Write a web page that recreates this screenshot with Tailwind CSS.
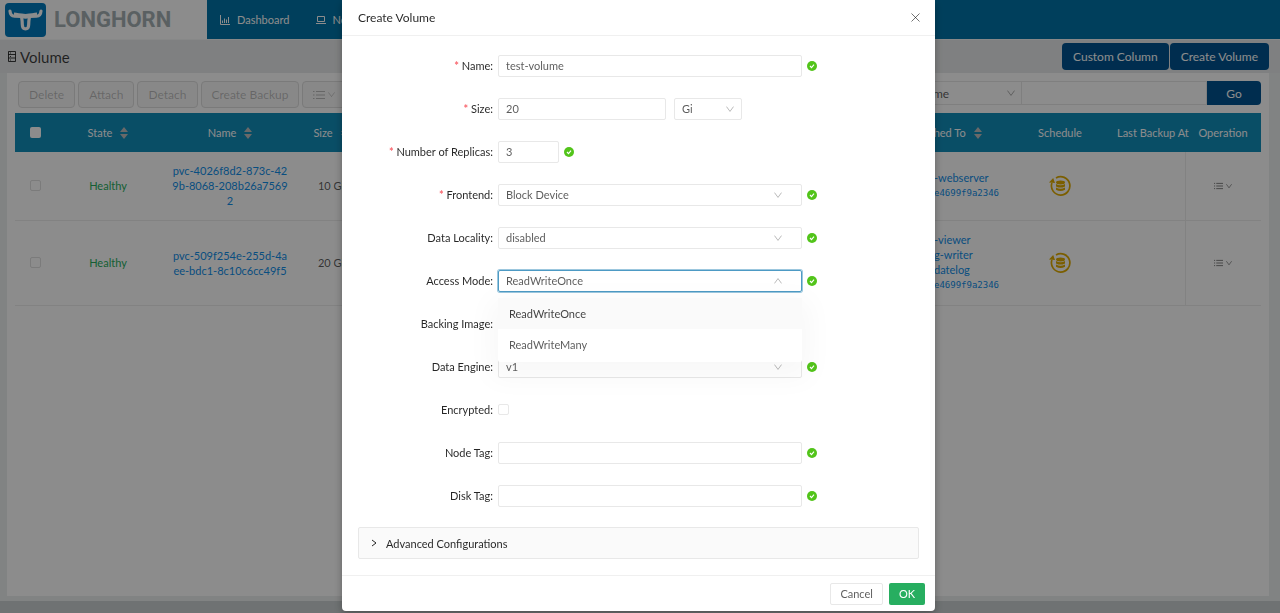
<!DOCTYPE html>
<html lang="en">
<head>
<meta charset="utf-8">
<meta name="viewport" content="width=device-width, initial-scale=1">
<title>Longhorn - Create Volume</title>
<script src="https://cdn.jsdelivr.net/npm/@tailwindcss/browser@4"></script>
</head>
<body class="font-['Lato','Noto_Sans',sans-serif] text-[11px] leading-[15px] text-black/65">
<svg class="hidden" aria-hidden="true">
  <symbol id="down" viewBox="0 0 10 10"><path d="M.600 2 5 8 9.400 2" fill="none" stroke="currentColor"/></symbol>
  <symbol id="up" viewBox="0 0 10 10"><path d="M.600 8 5 2 9.400 8" fill="none" stroke="currentColor"/></symbol>
  <symbol id="check" viewBox="0 0 10 10"><circle cx="5" cy="5" r="5" fill="#52c41a"/><path d="M3 5 4.500 6.600 7 3.600" fill="none" stroke="#fff" stroke-width="1.100"/></symbol>
  <symbol id="sort" viewBox="0 0 8 12"><path d="M4 0 8 5H0zM4 12 0 7h8z" fill="currentColor"/></symbol>
  <symbol id="list" viewBox="0 0 12 10"><path d="M3 1.500h9M3 5h9M3 8.500h9M0 1.500h1.500M0 5h1.500M0 8.500h1.500" stroke="currentColor"/></symbol>
  <symbol id="backup" viewBox="0 0 22 22"><path d="M7 2.900A9.200 9.200 0 1 1 2.900 8" fill="none" stroke="currentColor" stroke-width="1.700"/><path d="M0 7.500 4.200 3l1.800 5z" fill="currentColor"/><ellipse cx="11.500" cy="7.500" rx="4.500" ry="1.900" fill="currentColor"/><path d="M7 9q4.500 2.400 9 0v2.400q-4.500 2.400-9 0zM7 12.500q4.500 2.400 9 0v2.300q-4.500 2.600-9 0z" fill="currentColor"/></symbol>
</svg>

<div class="flex min-h-screen flex-col bg-[#eceeee]">
  <header class="flex h-[39px] bg-[#0074a8]">
    <a href="#" class="flex w-[207px] items-center gap-2 bg-white pl-[5px]" aria-label="Longhorn">
      <svg class="h-[34px] w-[41px]" viewBox="0 0 41 34"><rect width="41" height="34" rx="4" fill="#007abd"/><path d="M5 8q.3 5 4.500 5.200l7 .3q.8 4.500.8 8 0 4.300 3.200 4.300t3.200-4.300q0-3.500.8-8l7-.3Q35.700 13 36 8" fill="none" stroke="#fff" stroke-width="3.200" stroke-linecap="round" stroke-linejoin="round"/><path d="M9 9.500q4 .5 11.500 1.500 7.500-1 11.500-1.500v4l-7.500 1q-4 2.500-8 0l-7.500-1z" fill="#fff"/></svg>
      <span class="font-['Roboto',sans-serif] text-[22px] leading-6 font-bold text-[#a5b0b3]">LONGHORN</span>
    </a>
    <nav class="flex items-center gap-[27px] pl-[13px] text-white">
      <a href="#" class="flex items-center gap-[7px]"><svg class="size-[10px]" viewBox="0 0 10 10" fill="none" stroke="currentColor"><path d="M.5 0v9.500H10M2.500 8V5.500M4.500 8V3.500M6.500 8V4.500M8.500 8V2"/></svg>Dashboard</a>
      <a href="#" class="flex items-center gap-[6px]"><svg class="size-[10px]" viewBox="0 0 10 10" fill="none" stroke="currentColor"><path d="M1.500 1.500h7v5h-7zM0 8.500h10"/></svg>Node</a>
    </nav>
  </header>

  <div class="flex h-[34px] items-center justify-between border-t border-white/60 bg-[#e8eaeb] pr-[11px] pl-2">
    <h1 class="flex items-center gap-1 text-[15px] leading-5 text-black/75"><svg class="h-[11px] w-[8px]" viewBox="0 0 8 11" fill="none" stroke="currentColor"><path d="M.5.5h7v10h-7zM.5 3.500h7M.5 7h7M2 2h1M2 5.500h1M2 9h1"/></svg>Volume</h1>
    <div class="flex gap-px text-[12px] text-white">
      <button class="h-[27px] rounded-sm bg-[#005391] px-[11px]">Custom Column</button>
      <button class="h-[27px] rounded-sm bg-[#005391] px-[11px]">Create Volume</button>
    </div>
  </div>

  <main class="mr-[11px] mb-[5px] ml-[7px] flex-1 bg-white px-2 pt-2">
    <div class="flex justify-between">
      <div class="flex gap-[3px] pl-[3px] text-[12px] text-black/25">
        <button disabled class="h-[27px] rounded-sm border border-[#dedede] bg-[#f8f8f8] px-[10px]">Delete</button>
        <button disabled class="h-[27px] rounded-sm border border-[#dedede] bg-[#f8f8f8] px-[10px]">Attach</button>
        <button disabled class="h-[27px] rounded-sm border border-[#dedede] bg-[#f8f8f8] px-[10px]">Detach</button>
        <button disabled class="h-[27px] rounded-sm border border-[#dedede] bg-[#f8f8f8] px-[10px]">Create Backup</button>
        <button disabled aria-label="More operations" class="flex h-[27px] items-center gap-[3px] rounded-sm border border-[#dedede] bg-[#f8f8f8] px-[10px]"><svg class="h-[10px] w-3"><use href="#list"/></svg><svg class="size-[7px]"><use href="#down"/></svg></button>
      </div>
      <form class="flex h-6">
        <div class="relative w-[110px]">
          <select aria-label="Filter field" class="h-full w-full appearance-none border border-[#e8e8e8] pl-[5px] text-[12px]"><option>Name</option></select>
          <svg class="pointer-events-none absolute top-2 right-[7px] size-2 text-black/40"><use href="#down"/></svg>
        </div>
        <input aria-label="Filter value" class="w-[185px] border border-l-0 border-[#e8e8e8]">
        <button class="w-[54px] rounded-r-sm bg-[#005391] text-[12px] text-white">Go</button>
      </form>
    </div>

    <table class="mt-[5px] w-full table-fixed text-center">
      <colgroup><col class="w-[41px]"><col class="w-[104px]"><col class="w-[140px]"><col class="w-[62px]"><col><col class="w-[120px]"><col class="w-[110px]"><col class="w-[70px]"><col class="w-[76px]"></colgroup>
      <thead class="bg-[#128ebb] text-white">
        <tr class="h-[39px] *:font-normal">
          <th><input type="checkbox" aria-label="Select all" class="mx-auto block size-[11px] appearance-none rounded-xs bg-white"></th>
          <th><span class="inline-flex items-center gap-2">State<svg class="h-3 w-2 text-[#bfbfbf]"><use href="#sort"/></svg></span></th>
          <th><span class="inline-flex items-center gap-2">Name<svg class="h-3 w-2 text-[#bfbfbf]"><use href="#sort"/></svg></span></th>
          <th><span class="inline-flex items-center gap-2">Size<svg class="h-3 w-2 text-[#bfbfbf]"><use href="#sort"/></svg></span></th>
          <th></th>
          <th><span class="inline-flex items-center gap-2 whitespace-nowrap">Attached To<svg class="h-3 w-2 text-[#bfbfbf]"><use href="#sort"/></svg></span></th>
          <th>Schedule</th>
          <th class="pl-[2px] text-left whitespace-nowrap">Last Backup At</th>
          <th>Operation</th>
        </tr>
      </thead>
      <tbody>
        <tr class="h-[68px] border-b border-[#ededed]">
          <td><input type="checkbox" aria-label="Select volume" class="mx-auto block size-[11px] appearance-none rounded-xs border border-[#e0e0e0]"></td>
          <td class="text-[#27ae60]">Healthy</td>
          <td><a href="#" class="text-[#108ee9]">pvc-4026f8d2-873c-42<br>9b-8068-208b26a7569<br>2</a></td>
          <td>10 Gi</td>
          <td></td>
          <td class="pl-[49px] text-left text-[#108ee9]"><a href="#" class="block">-webserver</a><a href="#" class="block font-['DejaVu_Sans_Mono',monospace] text-[9px] leading-4">e4699f9a2346</a></td>
          <td class="text-[#e0ac00]"><svg class="mx-auto size-[22px]"><use href="#backup"/></svg></td>
          <td class="border-r border-[#ededed]"></td>
          <td><button aria-label="Operations" class="inline-flex items-center gap-[3px]"><svg class="h-2 w-[9px]"><use href="#list"/></svg><svg class="size-[6px]"><use href="#down"/></svg></button></td>
        </tr>
        <tr class="h-[85px] border-b border-[#ededed]">
          <td><input type="checkbox" aria-label="Select volume" class="mx-auto block size-[11px] appearance-none rounded-xs border border-[#e0e0e0]"></td>
          <td class="text-[#27ae60]">Healthy</td>
          <td><a href="#" class="text-[#108ee9]">pvc-509f254e-255d-4a<br>ee-bdc1-8c10c6cc49f5</a></td>
          <td>20 Gi</td>
          <td></td>
          <td class="pl-[49px] text-left text-[#108ee9]"><a href="#" class="block">-viewer</a><a href="#" class="block">g-writer</a><a href="#" class="block">datelog</a><a href="#" class="block font-['DejaVu_Sans_Mono',monospace] text-[9px] leading-4">e4699f9a2346</a></td>
          <td class="text-[#e0ac00]"><svg class="mx-auto size-[22px]"><use href="#backup"/></svg></td>
          <td class="border-r border-[#ededed]"></td>
          <td><button aria-label="Operations" class="inline-flex items-center gap-[3px]"><svg class="h-2 w-[9px]"><use href="#list"/></svg><svg class="size-[6px]"><use href="#down"/></svg></button></td>
        </tr>
      </tbody>
    </table>
  </main>
  <footer class="h-3 bg-[#cad0d1]"></footer>
</div>

<div class="fixed inset-0 flex items-start justify-center bg-black/45 pr-[3px]">
  <section role="dialog" aria-labelledby="title" class="w-[593px] rounded-b-sm bg-white shadow-[0_3px_9px_rgba(0,0,0,0.3)]">
    <div class="flex h-9 items-center justify-between border-b border-[#f0f0f0] px-4 text-black/85">
      <h2 id="title" class="text-[12px]">Create Volume</h2>
      <button aria-label="Close" class="-mr-px text-black/55"><svg class="size-[9px]" viewBox="0 0 9 9" stroke="currentColor"><path d="m.5.5 8 8m0-8-8 8"/></svg></button>
    </div>
    <form class="pt-2">
      <div class="flex h-[43px] items-center gap-[5px]">
        <label for="name" class="w-[151px] text-right text-black/85"><span class="font-bold text-[#f5222d]/70">*</span> Name:</label>
        <input id="name" value="test-volume" class="h-[22px] w-[304px] rounded-xs border border-[#e8e8e8] px-[7px]">
        <svg class="size-[10px]"><use href="#check"/></svg>
      </div>
      <div class="flex h-[43px] items-center gap-[5px]">
        <label for="size" class="w-[151px] text-right text-black/85"><span class="font-bold text-[#f5222d]/70">*</span> Size:</label>
        <div class="flex gap-2">
          <input id="size" value="20" class="h-[22px] w-[168px] rounded-xs border border-[#e8e8e8] px-[7px]">
          <div class="relative w-[68px]">
            <select aria-label="Size unit" class="h-[22px] w-full appearance-none rounded-xs border border-[#e8e8e8] px-[7px]"><option>Gi</option></select>
            <svg class="pointer-events-none absolute top-[7px] right-2 size-2 text-black/35"><use href="#down"/></svg>
          </div>
        </div>
      </div>
      <div class="flex h-[43px] items-center gap-[5px]">
        <label for="replicas" class="w-[151px] text-right text-black/85"><span class="font-bold text-[#f5222d]/70">*</span> Number of Replicas:</label>
        <input id="replicas" value="3" class="h-[22px] w-[61px] rounded-xs border border-[#e8e8e8] px-[7px]">
        <svg class="size-[10px]"><use href="#check"/></svg>
      </div>
      <div class="flex h-[43px] items-center gap-[5px]">
        <label for="frontend" class="w-[151px] text-right text-black/85"><span class="font-bold text-[#f5222d]/70">*</span> Frontend:</label>
        <div class="relative w-[304px]">
          <select id="frontend" class="h-[22px] w-full appearance-none rounded-xs border border-[#e8e8e8] px-[7px]"><option>Block Device</option></select>
          <svg class="pointer-events-none absolute top-[7px] right-5 size-2 text-black/35"><use href="#down"/></svg>
        </div>
        <svg class="size-[10px]"><use href="#check"/></svg>
      </div>
      <div class="flex h-[43px] items-center gap-[5px]">
        <label for="locality" class="w-[151px] text-right text-black/85">Data Locality:</label>
        <div class="relative w-[304px]">
          <select id="locality" class="h-[22px] w-full appearance-none rounded-xs border border-[#e8e8e8] px-[7px]"><option>disabled</option></select>
          <svg class="pointer-events-none absolute top-[7px] right-5 size-2 text-black/35"><use href="#down"/></svg>
        </div>
        <svg class="size-[10px]"><use href="#check"/></svg>
      </div>
      <div class="flex h-[43px] items-center gap-[5px]">
        <label for="access" class="w-[151px] text-right text-black/85">Access Mode:</label>
        <div class="relative w-[304px]">
          <select id="access" class="h-[22px] w-full appearance-none rounded-xs border border-[#4d9ac4] px-[7px] shadow-[0_0_0_1px_#9cc7de]"><option>ReadWriteOnce</option></select>
          <svg class="pointer-events-none absolute top-[7px] right-5 size-2 text-black/35"><use href="#up"/></svg>
          <ul role="listbox" aria-label="Access Mode" class="absolute inset-x-0 top-[28px] z-10 rounded-xs bg-white pb-[2px] shadow-[0_9px_28px_8px_rgba(0,0,0,0.03)]">
            <li role="option" aria-selected="true" class="flex h-[31px] items-center bg-[#fafafa] px-[11px] text-black/75">ReadWriteOnce</li>
            <li role="option" class="flex h-[31px] items-center px-[11px]">ReadWriteMany</li>
          </ul>
        </div>
        <svg class="size-[10px]"><use href="#check"/></svg>
      </div>
      <div class="flex h-[43px] items-center gap-[5px]">
        <label for="image" class="w-[151px] text-right text-black/85">Backing Image:</label>
        <select id="image" class="h-[22px] w-[304px] appearance-none rounded-xs border border-[#e8e8e8]"></select>
      </div>
      <div class="flex h-[43px] items-center gap-[5px]">
        <label for="engine" class="w-[151px] text-right text-black/85">Data Engine:</label>
        <div class="relative w-[304px]">
          <select id="engine" class="h-[22px] w-full appearance-none rounded-xs border border-[#e8e8e8] px-[7px]"><option>v1</option></select>
          <svg class="pointer-events-none absolute top-[7px] right-5 size-2 text-black/35"><use href="#down"/></svg>
        </div>
        <svg class="size-[10px]"><use href="#check"/></svg>
      </div>
      <div class="flex h-[43px] items-center gap-[5px]">
        <label for="encrypted" class="w-[151px] text-right text-black/85">Encrypted:</label>
        <input id="encrypted" type="checkbox" class="size-[11px] appearance-none rounded-xs border border-[#e8e8e8]">
      </div>
      <div class="flex h-[43px] items-center gap-[5px]">
        <label for="nodetag" class="w-[151px] text-right text-black/85">Node Tag:</label>
        <input id="nodetag" class="h-[22px] w-[304px] rounded-xs border border-[#e8e8e8] px-[7px]">
        <svg class="size-[10px]"><use href="#check"/></svg>
      </div>
      <div class="flex h-[43px] items-center gap-[5px]">
        <label for="disktag" class="w-[151px] text-right text-black/85">Disk Tag:</label>
        <input id="disktag" class="h-[22px] w-[304px] rounded-xs border border-[#e8e8e8] px-[7px]">
        <svg class="size-[10px]"><use href="#check"/></svg>
      </div>
      <div class="px-4 pt-[10px] pb-4">
        <button type="button" aria-expanded="false" class="flex h-8 w-full items-center gap-2 rounded-xs border border-[#e8e8e8] bg-[#fafafa] px-[11px] text-black/85"><svg class="size-2" viewBox="0 0 8 8" fill="none" stroke="currentColor"><path d="m2 1 4 3-4 3"/></svg>Advanced Configurations</button>
      </div>
      <div class="flex h-9 items-center justify-end gap-[6px] border-t border-[#f0f0f0] pr-[10px]">
        <button type="button" class="h-[22px] rounded-xs border border-[#e8e8e8] px-[9px]">Cancel</button>
        <button class="h-[22px] rounded-xs bg-[#27ae60] px-[10px] text-white">OK</button>
      </div>
    </form>
  </section>
</div>
</body>
</html>
